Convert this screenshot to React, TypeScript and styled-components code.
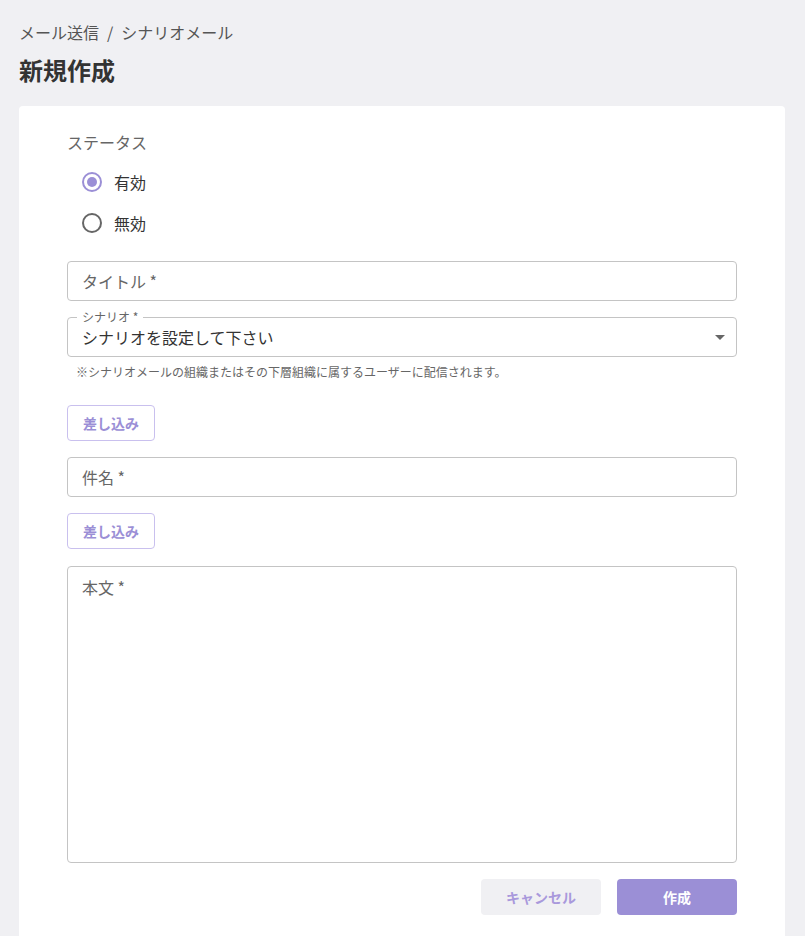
import React from "react";
import styled, { createGlobalStyle } from "styled-components";

const GlobalStyle = createGlobalStyle`
  body {
    margin: 0;
    background: #f0f0f3;
    font-family: "Noto Sans CJK JP", "Noto Sans", sans-serif;
    color: #333;
  }
`;

const Page = styled.div`
  padding: 20px 20px 0 19px;
`;
const Breadcrumb = styled.div`
  font-size: 16px;
  line-height: 24px;
  color: #555;
  display: flex;
  gap: 8px;
`;
const Title = styled.h1`
  margin: 9px 0 0;
  font-size: 24px;
  line-height: 34px;
  font-weight: 700;
  color: #333;
`;
const Card = styled.div`
  margin-top: 19px;
  background: #fff;
  border-radius: 4px;
  padding: 24px 48px 40px;
  min-height: 820px;
`;
const Label = styled.div`
  font-size: 16px;
  line-height: 24px;
  color: #666;
`;
const RadioGroup = styled.div`
  display: flex;
  flex-direction: column;
  padding: 16px 0 0 15px;
  gap: 17px;
`;
const RadioRow = styled.label`
  display: flex;
  align-items: center;
  gap: 12px;
  font-size: 16px;
  line-height: 24px;
  color: #333;
`;
const RadioCircle = styled.span<{ checked?: boolean }>`
  box-sizing: border-box;
  width: 20px;
  height: 20px;
  border-radius: 50%;
  border: 2px solid ${p => (p.checked ? "#9b8fd6" : "#666")};
  display: flex;
  align-items: center;
  justify-content: center;
  &::after {
    content: "";
    display: ${p => (p.checked ? "block" : "none")};
    width: 10px;
    height: 10px;
    border-radius: 50%;
    background: #9b8fd6;
  }
`;
const Field = styled.div<{ mt?: number; h?: number }>`
  position: relative;
  box-sizing: border-box;
  margin-top: ${p => p.mt ?? 0}px;
  height: ${p => p.h ?? 40}px;
  border: 1px solid #c4c4c4;
  border-radius: 4px;
  padding: 0 14px;
  display: flex;
  align-items: ${p => (p.h ? "flex-start" : "center")};
  padding-top: ${p => (p.h ? 8 : 0)}px;
  font-size: 16px;
  color: #666;
`;
const Legend = styled.span`
  position: absolute;
  top: -8px;
  left: 9px;
  padding: 0 5px;
  background: #fff;
  font-size: 12px;
  line-height: 14px;
  color: #666;
`;
const SelectValue = styled.span`
  flex: 1;
  color: #333;
  font-size: 16px;
`;
const Caret = styled.span`
  width: 0;
  height: 0;
  border-left: 5px solid transparent;
  border-right: 5px solid transparent;
  border-top: 5px solid #666;
  margin-right: -3px;
`;
const Helper = styled.div`
  margin: 6px 0 0 9px;
  font-size: 12px;
  line-height: 18px;
  color: #666;
`;
const InsertButton = styled.button<{ mt: number }>`
  display: block;
  margin-top: ${p => p.mt}px;
  width: 88px;
  height: 36px;
  border: 1px solid #c9c0ee;
  border-radius: 4px;
  background: #fff;
  color: #9b8fd6;
  font-family: inherit;
  font-size: 14px;
  font-weight: 700;
`;
const Footer = styled.div`
  display: flex;
  justify-content: flex-end;
  gap: 16px;
  margin-top: 16px;
`;
const ActionButton = styled.button<{ primary?: boolean }>`
  width: 120px;
  height: 36px;
  border: none;
  border-radius: 4px;
  background: ${p => (p.primary ? "#9b8fd6" : "#f0f0f3")};
  color: ${p => (p.primary ? "#fff" : "#a999dc")};
  font-family: inherit;
  font-size: 14px;
  font-weight: 700;
`;

export default function App() {
  return (
    <>
      <GlobalStyle />
      <Page>
        <Breadcrumb>
          <span>メール送信</span>
          <span>/</span>
          <span>シナリオメール</span>
        </Breadcrumb>
        <Title>新規作成</Title>
        <Card>
          <Label>ステータス</Label>
          <RadioGroup>
            <RadioRow>
              <RadioCircle checked />
              有効
            </RadioRow>
            <RadioRow>
              <RadioCircle />
              無効
            </RadioRow>
          </RadioGroup>
          <Field mt={26}>タイトル *</Field>
          <Field mt={16}>
            <Legend>シナリオ *</Legend>
            <SelectValue>シナリオを設定して下さい</SelectValue>
            <Caret />
          </Field>
          <Helper>※シナリオメールの組織またはその下層組織に属するユーザーに配信されます。</Helper>
          <InsertButton mt={24}>差し込み</InsertButton>
          <Field mt={16}>件名 *</Field>
          <InsertButton mt={16}>差し込み</InsertButton>
          <Field mt={17} h={297}>本文 *</Field>
          <Footer>
            <ActionButton>キャンセル</ActionButton>
            <ActionButton primary>作成</ActionButton>
          </Footer>
        </Card>
      </Page>
    </>
  );
}
